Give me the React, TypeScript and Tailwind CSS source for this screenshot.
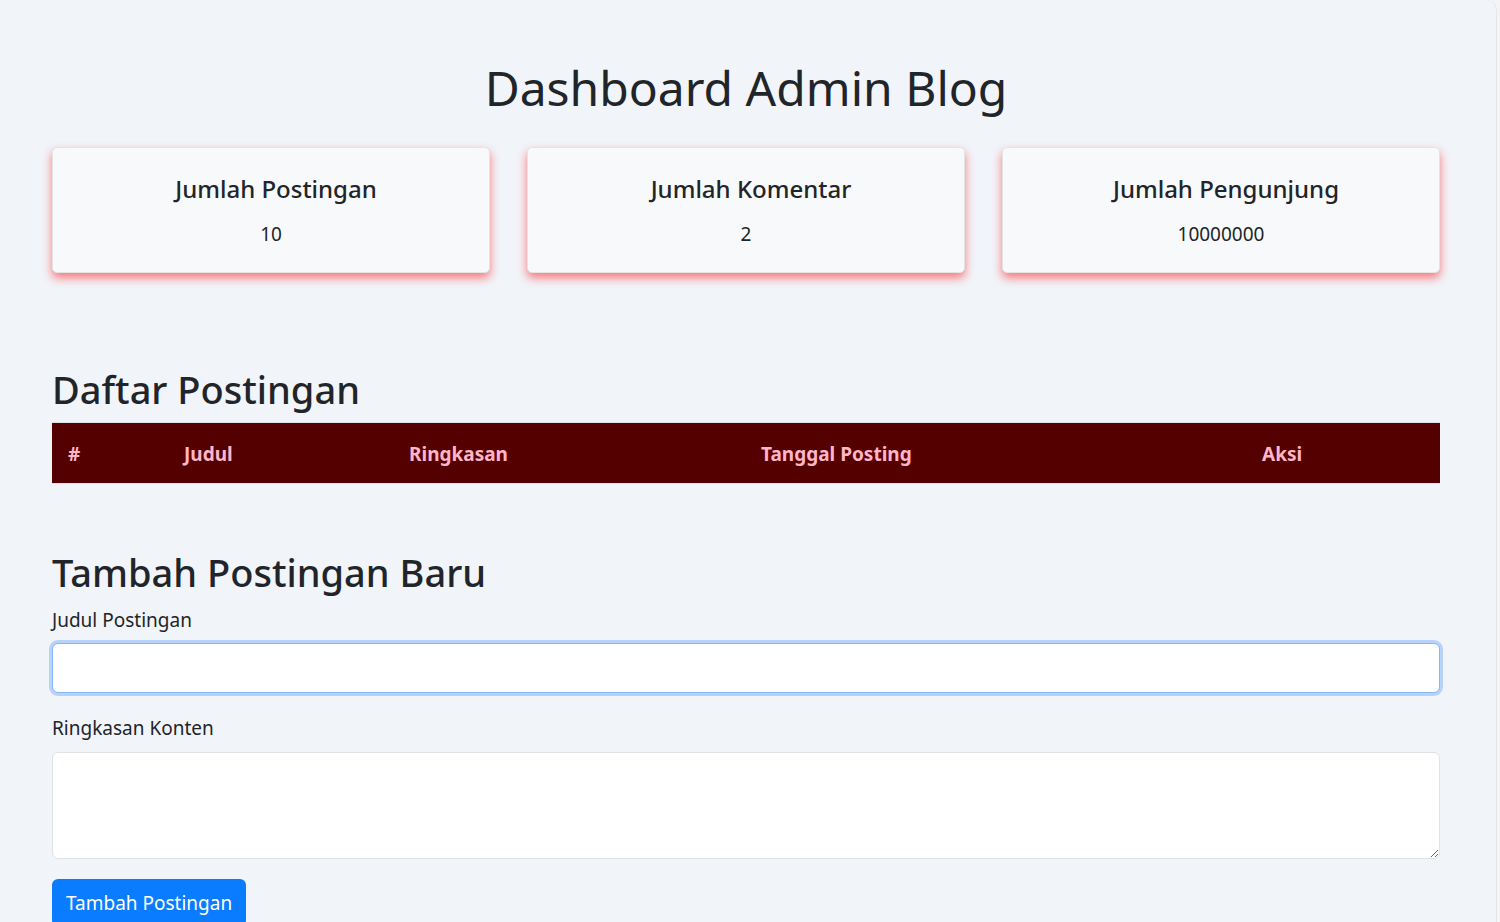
import { useState } from 'react';

// Summary counters shown at the top of the dashboard.
const stats = [
  { label: 'Jumlah Postingan', value: '10' },
  { label: 'Jumlah Komentar', value: '2' },
  { label: 'Jumlah Pengunjung', value: '10000000' },
];

const columns = ['#', 'Judul', 'Ringkasan', 'Tanggal Posting', 'Aksi'];

export default function App() {
  const [judul, setJudul] = useState('');
  const [ringkasan, setRingkasan] = useState('');

  return (
    <div className="flex min-h-screen bg-[#f4f4f5] font-['Noto_Sans',sans-serif] text-[#212529]">
      <div className="mr-[3px] flex-1 rounded-tr-[10px] border-r border-[#e3e5ea] bg-[#f1f4f9] pb-10 pl-[52px] pr-[56px]">
        <h1 className="pt-[58px] text-center text-[48px] leading-[60px] font-normal">Dashboard Admin Blog</h1>

        {/* stat cards */}
        <div className="mt-[29px] grid grid-cols-3 gap-[37px]">
          {stats.map((s) => (
            <div
              key={s.label}
              className="flex h-[126px] flex-col items-center rounded-[5px] border border-[#e4e4e7] bg-[#f8f9fa] pt-[24px] shadow-[0_5px_10px_rgba(255,40,40,0.6)]"
            >
              <h5 className="pl-[10px] text-[24px] leading-[34px] font-medium">{s.label}</h5>
              <p className="mt-[15px] text-[19px] leading-[26px]">{s.value}</p>
            </div>
          ))}
        </div>

        <h2 className="mt-[92px] text-[38px] leading-[48px] font-medium">Daftar Postingan</h2>
        <div className="mt-[9px] grid h-[62px] grid-cols-[116px_225px_352px_501px_1fr] items-center border-y border-[#dee2e6] bg-[#550000] text-[19px] font-bold text-[#ffb6c8]">
          {columns.map((c) => (
            <div key={c} className="px-4 pt-[2px]">
              {c}
            </div>
          ))}
        </div>

        <h2 className="mt-[64px] text-[38px] leading-[48px] font-medium">Tambah Postingan Baru</h2>
        <form className="mt-[10px] flex flex-col" onSubmit={(e) => e.preventDefault()}>
          <label className="text-[19px] leading-[28px]">Judul Postingan</label>
          <input
            autoFocus
            value={judul}
            onChange={(e) => setJudul(e.target.value)}
            className="mt-[9px] h-[50px] rounded-[6px] border border-[#86b7fe] bg-white px-4 text-[19px] caret-[#212529] outline-none shadow-[0_0_0_3px_rgba(13,110,253,0.25)]"
          />
          <label className="mt-[21px] text-[19px] leading-[28px]">Ringkasan Konten</label>
          <textarea
            value={ringkasan}
            onChange={(e) => setRingkasan(e.target.value)}
            className="mt-[10px] h-[107px] rounded-[6px] border border-[#dee2e6] bg-white px-4 py-2 text-[19px] outline-none"
          />
          <div className="mt-[20px]">
            <button
              type="submit"
              className="h-[48px] rounded-[6px] bg-[#0a7cff] px-[14px] text-[19px] leading-[48px] text-white"
            >
              Tambah Postingan
            </button>
          </div>
        </form>
      </div>
    </div>
  );
}
